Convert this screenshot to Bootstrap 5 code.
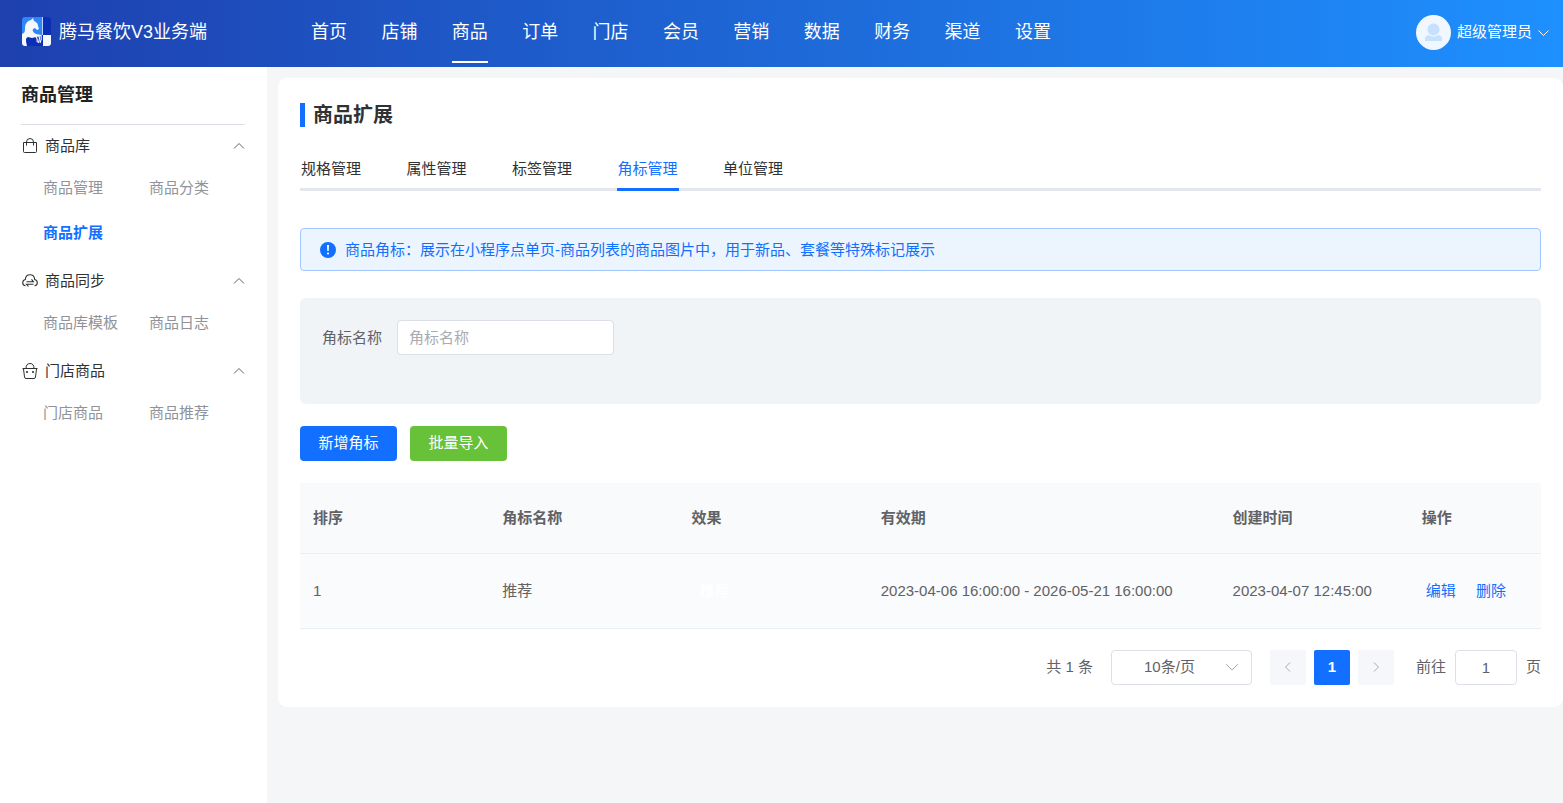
<!DOCTYPE html>
<html lang="zh-CN">
<head>
<meta charset="utf-8">
<meta name="viewport" content="width=device-width, initial-scale=1">
<title>商品扩展 - 腾马餐饮V3业务端</title>
<link href="https://cdn.jsdelivr.net/npm/bootstrap@5.3.0/dist/css/bootstrap.min.css" rel="stylesheet">
<style>
  :root { --brand: #126fff; --line: #dcdfe6; --ink: #303133; --text: #606266; --muted: #909399; }
  body { font: 15px/24px "Liberation Sans", "Noto Sans CJK SC", sans-serif; color: var(--text); background: #f5f6f8; }
  a { text-decoration: none; }
  svg { display: block; flex: none; }

  .topbar { height: 67px; padding: 0 14px 0 22px; background: linear-gradient(90deg, #1e40af, #1e90ff); color: #fff; }
  .brand-box { width: 289px; gap: 8px; font-size: 18px; color: #fff; }
  .main-nav { width: 740px; font-size: 18px; }
  .main-nav a { color: #fff; height: 63px; line-height: 64px; border-bottom: 2px solid transparent; }
  .main-nav a.active { border-color: #fff; }
  .user-btn { color: #fff; gap: 6px; height: 65px; font-size: 15px; }
  .user-btn:hover { color: #fff; }

  .sidebar { width: 267px; padding: 0 22px 0 21px; background: #fff; min-height: calc(100vh - 67px); }
  .side-title { font-size: 18px; font-weight: 700; line-height: 57px; margin: 0 0 1px; border-bottom: 1px solid var(--line); color: #222; }
  .side-group { margin-bottom: 6px; }
  .side-head { width: 100%; height: 39px; padding: 0 0 0 1px; gap: 7px; border: 0; background: none; color: var(--ink); text-align: left; }
  .side-links { display: grid; grid-template-columns: 106px 1fr; padding-left: 22px; }
  .side-links a { color: var(--muted); line-height: 45px; white-space: nowrap; }
  .side-links a.active { color: var(--brand); font-weight: 700; }

  .panel { margin-top: 11px; margin-left: 11px; padding: 22px; background: #fff; border-radius: 9px; }
  .page-title { font-size: 20px; line-height: 24px; font-weight: 700; color: var(--ink); border-left: 5px solid var(--brand); padding-left: 8px; margin: 3px 0 20px; }
  .tabs-line { box-shadow: inset 0 -3px #e4e7ed; margin-bottom: 37px; }
  .tabs-row { width: 484px; }
  .tabs-row a { width: 62px; height: 44px; line-height: 43px; color: var(--ink); text-align: center; border-bottom: 3px solid transparent; white-space: nowrap; }
  .tabs-row a.active { color: var(--brand); border-color: var(--brand); }
  .tip { height: 43px; padding: 0 19px; gap: 9px; margin-bottom: 27px; color: var(--brand); background: #ecf4fd; border: 1px solid #a3c8ff; border-radius: 4px; }
  .filter { min-height: 106px; padding: 22px; margin-bottom: 22px; background: #f0f4f7; border-radius: 6px; }
  .field { height: 35px; font-size: 15px; color: var(--text); border-color: var(--line); border-radius: 4px; }
  .field::placeholder { color: #a8abb2; }
  .filter label { width: 75px; line-height: 35px; }
  .filter .field { width: 217px; padding: 0 11px; }
  .act { width: 97px; height: 35px; padding: 0; font-size: 15px; color: #fff; border: 0; border-radius: 4px; }
  .act-add, .act-add:hover { background: var(--brand); color: #fff; }
  .act-import, .act-import:hover { background: #67c23a; color: #fff; }
  .act-row { gap: 13px; }

  .grid-table { table-layout: fixed; margin: 22px 0; color: var(--text); }
  .grid-table > :not(caption) > * > * { padding: 0 13px; height: 75px; vertical-align: middle; border-bottom: 1px solid #ebeef5; white-space: nowrap; color: var(--text); background: #fafbfc; }
  .grid-table > thead > tr > th { height: 70px; background: #f9fafc; }
  .mark-sample { color: #fff; font-weight: 700; padding-left: 8px; }
  .ops a { color: var(--brand); }

  .pager { gap: 18px; margin-top: -1px; }
  .pager .field { background-color: #fff; text-align: center; }
  .size-select { width: 141px; padding: 0 24px 0 0; text-align-last: center; background-position: right 12px center; background-size: 14px;
    background-image: url("data:image/svg+xml,%3Csvg xmlns='http://www.w3.org/2000/svg' viewBox='0 0 14 14'%3E%3Cpath d='M1 4l6 6 6-6' fill='none' stroke='%23a8abb2'/%3E%3C/svg%3E"); }
  .page-btn { width: 36px; height: 35px; border: 0; border-radius: 2px; background: #f5f7fa; color: #a8abb2; display: grid; place-items: center; padding: 0; }
  .page-btn.current { background: var(--brand); color: #fff; font-weight: 700; }
  .jump-box { gap: 9px; margin-left: 4px; }
  .jump { width: 62px; padding: 0; }
</style>
</head>
<body>
<header class="topbar d-flex align-items-start">
  <a href="#" class="brand-box d-flex align-items-center h-100 flex-shrink-0 pb-1">
    <svg width="29" height="29" viewBox="0 0 29 29" aria-hidden="true">
      <path d="M3 0h18v18H0V3q0-3 3-3z" fill="#2f86f6"/>
      <path d="M21 0h5q3 0 3 3v15h-8z" fill="#0a2fb4"/>
      <path d="M20 0h1v18h-1z" fill="#b9d5ff"/>
      <path d="M0 18h21v11H3q-3 0-3-3z" fill="#0a2fb4"/>
      <path d="M21 18h8v8q0 3-3 3h-5z" fill="#f5f8fb"/>
      <path d="M0 17c3-1 3-3 3-6 0-4 2-7 6-8l2-2 1 3c3 1 4 3 4 5l1 3-2 1-2-2-2 1c-1 2 1 4 3 5l5 1v1l-5 1-4 1-4-1c-3 1-2 4-1 9H3q-3 0-3-3z" fill="#f5f8fb"/>
      <path d="M13 19q3 2 2 6M16 18q3 3 0 8M19 18q1 4-1 8" fill="none" stroke="#f5f8fb" stroke-width="1.200"/>
    </svg>
    <span>腾马餐饮V3业务端</span>
  </a>
  <nav class="main-nav d-flex justify-content-between">
    <a href="#">首页</a><a href="#">店铺</a><a href="#" class="active">商品</a><a href="#">订单</a><a href="#">门店</a><a href="#">会员</a><a href="#">营销</a><a href="#">数据</a><a href="#">财务</a><a href="#">渠道</a><a href="#">设置</a>
  </nav>
  <button type="button" class="user-btn btn border-0 p-0 ms-auto d-flex align-items-center">
    <svg width="35" height="35" viewBox="0 0 35 35" aria-hidden="true">
      <circle cx="17.500" cy="17.500" r="17.500" fill="#f0f7ff"/>
      <circle cx="17.500" cy="14.500" r="6" fill="#c6e0ff"/>
      <path d="M9 26v-2q0-3 3.500-4 5 3.500 10 0 3.500 1 3.500 4v2z" fill="#c6e0ff"/>
    </svg>
    <span>超级管理员</span>
    <svg width="11" height="12" viewBox="0 0 11 12" fill="none" stroke="#fff" aria-hidden="true"><path d="M.5 3.500l5 5 5-5"/></svg>
  </button>
</header>

<div class="d-flex">
  <aside class="sidebar flex-shrink-0">
    <h2 class="side-title">商品管理</h2>
    <section class="side-group">
      <button type="button" class="side-head d-flex align-items-center">
        <svg width="16" height="16" viewBox="0 0 16 16" fill="none" stroke="#303133" aria-hidden="true"><path d="M1.500 4.500h13v9q0 1-1 1h-11q-1 0-1-1zM4.500 7.500V4q0-3.500 3.500-3.500T11.500 4v3.500"/></svg>
        <span class="flex-grow-1">商品库</span>
        <svg width="12" height="12" viewBox="0 0 12 12" fill="none" stroke="#606266" aria-hidden="true"><path d="M1 8.500l5-5 5 5"/></svg>
      </button>
      <div class="side-links"><a href="#">商品管理</a><a href="#">商品分类</a><a href="#" class="active">商品扩展</a></div>
    </section>
    <section class="side-group">
      <button type="button" class="side-head d-flex align-items-center">
        <svg width="16" height="16" viewBox="0 0 16 16" fill="none" stroke="#303133" stroke-width="1.100" aria-hidden="true"><path d="M3.500 12.800C1.500 12.500.7 11.200.7 9.700c0-1.700 1-2.800 2.600-3.200C3.500 3.500 5.300 1.700 8 1.700s4.500 1.800 4.700 4.800c1.600.4 2.600 1.500 2.600 3.200 0 1.500-.8 2.800-2.800 3.100"/><path d="M4.500 8.800h7L9.500 6.300M11.500 11.300h-7l2 2.200"/></svg>
        <span class="flex-grow-1">商品同步</span>
        <svg width="12" height="12" viewBox="0 0 12 12" fill="none" stroke="#606266" aria-hidden="true"><path d="M1 8.500l5-5 5 5"/></svg>
      </button>
      <div class="side-links"><a href="#">商品库模板</a><a href="#">商品日志</a></div>
    </section>
    <section class="side-group">
      <button type="button" class="side-head d-flex align-items-center">
        <svg width="16" height="16" viewBox="0 0 16 16" fill="none" stroke="#303133" aria-hidden="true"><path d="M.5 5.500h15M1.500 6l1 8q.2 1.500 1.500 1.500h8q1.300 0 1.500-1.500l1-8M4 5.500Q4 .500 8 .500t4 5"/><path d="M5 8v2M11 8v2" stroke-width="1.600"/></svg>
        <span class="flex-grow-1">门店商品</span>
        <svg width="12" height="12" viewBox="0 0 12 12" fill="none" stroke="#606266" aria-hidden="true"><path d="M1 8.500l5-5 5 5"/></svg>
      </button>
      <div class="side-links"><a href="#">门店商品</a><a href="#">商品推荐</a></div>
    </section>
  </aside>

  <main class="flex-grow-1">
    <div class="panel">
      <h1 class="page-title">商品扩展</h1>
      <div class="tabs-line">
        <nav class="tabs-row d-flex justify-content-between">
          <a href="#">规格管理</a><a href="#">属性管理</a><a href="#">标签管理</a><a href="#" class="active">角标管理</a><a href="#">单位管理</a>
        </nav>
      </div>
      <div class="tip d-flex align-items-center">
        <svg width="16" height="16" viewBox="0 0 16 16" aria-hidden="true"><circle cx="8" cy="8" r="8" fill="#126fff"/><path d="M7 3h2l-.3 6H7.300z" fill="#fff"/><circle cx="8" cy="11.500" r="1.100" fill="#fff"/></svg>
        <span>商品角标：展示在小程序点单页-商品列表的商品图片中，用于新品、套餐等特殊标记展示</span>
      </div>
      <form class="filter d-flex align-items-start">
        <label for="markName">角标名称</label>
        <input id="markName" type="text" class="form-control field" placeholder="角标名称">
      </form>
      <div class="act-row d-flex">
        <button type="button" class="btn act act-add">新增角标</button>
        <button type="button" class="btn act act-import">批量导入</button>
      </div>
      <table class="table grid-table">
        <colgroup><col style="width:15.25%"><col style="width:15.25%"><col style="width:15.25%"><col style="width:28.35%"><col style="width:15.25%"><col></colgroup>
        <thead><tr><th>排序</th><th>角标名称</th><th>效果</th><th>有效期</th><th>创建时间</th><th>操作</th></tr></thead>
        <tbody><tr><td>1</td><td>推荐</td><td><span class="mark-sample">推荐</span></td><td>2023-04-06 16:00:00 - 2026-05-21 16:00:00</td><td>2023-04-07 12:45:00</td><td class="ops"><a href="#" class="ms-1 me-3">编辑</a> <a href="#">删除</a></td></tr></tbody>
      </table>
      <div class="pager d-flex justify-content-end align-items-center">
        <span>共 1 条</span>
        <select class="form-select field size-select" aria-label="每页条数"><option>10条/页</option><option>20条/页</option></select>
        <div class="d-flex gap-2">
          <button type="button" class="page-btn" aria-label="上一页"><svg width="12" height="12" viewBox="0 0 12 12" fill="none" stroke="currentColor"><path d="M8 1.500L3.500 6 8 10.500"/></svg></button>
          <button type="button" class="page-btn current">1</button>
          <button type="button" class="page-btn" aria-label="下一页"><svg width="12" height="12" viewBox="0 0 12 12" fill="none" stroke="currentColor"><path d="M4 1.500L8.500 6 4 10.500"/></svg></button>
        </div>
        <div class="jump-box d-flex align-items-center">
          <label for="jumpTo">前往</label>
          <input id="jumpTo" type="text" class="form-control field jump" value="1">
          <span>页</span>
        </div>
      </div>
    </div>
  </main>
</div>
<script src="https://cdn.jsdelivr.net/npm/bootstrap@5.3.0/dist/js/bootstrap.bundle.min.js"></script>
</body>
</html>
